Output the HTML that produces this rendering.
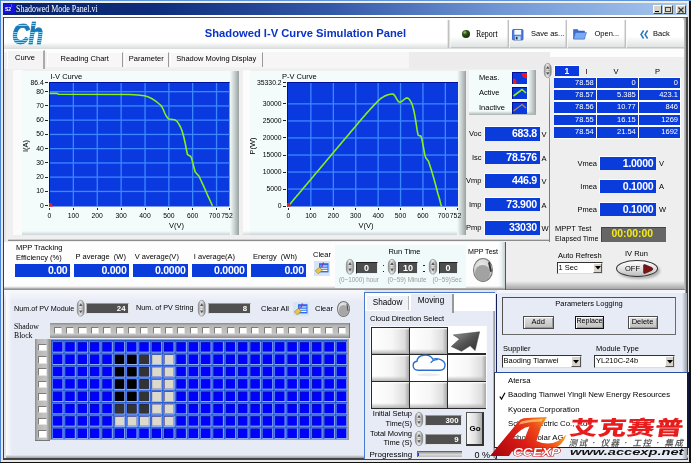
<!DOCTYPE html><html><head><meta charset="utf-8"><title>Shadowed Mode Panel.vi</title><style>
html,body{margin:0;padding:0;}
body{width:691px;height:463px;position:relative;overflow:hidden;will-change:transform;background:#e9e9ee;font-family:"Liberation Sans",sans-serif;font-size:7.5px;color:#000;}
div{position:absolute;box-sizing:border-box;}
svg{position:absolute;overflow:visible;}
.t{position:absolute;white-space:nowrap;line-height:10px;margin-top:-5px;font-size:7.5px;}
.r{transform:translateX(-100%);}
.c{transform:translateX(-50%);}
.s{font-family:"Liberation Serif",serif;}
.vb{background:#0a3cdc;color:#fff;font-weight:bold;font-size:10.6px;letter-spacing:-0.3px;text-align:right;line-height:13px;padding-right:2.6px;border-top:1px solid #fff;border-left:1px solid #fff;}
.gb{background:#505050;color:#fff;font-weight:bold;font-size:7.8px;text-align:right;line-height:9.5px;padding-right:2.5px;border-top:1px solid #9a9a9a;border-left:1px solid #b0b0b0;border-bottom:1px solid #e4e4e4;border-right:1px solid #e4e4e4;}
.cell{background:#0a3cdc;color:#fff;font-size:7.5px;text-align:right;line-height:10.6px;padding-right:2px;}
.btn{background:linear-gradient(#e2e2e2,#bebebe);border:1.3px solid #4c4c4c;text-align:center;font-size:7.5px;line-height:10.4px;box-shadow:inset 1px 1px 0 #fff,inset -1px -1px 0 #999;}
.sp{border-radius:3.5px/6px;background:linear-gradient(90deg,#888,#e8e8e8 40%,#bbb 70%,#777);border:0.5px solid #777;}
.combo{background:#fff;border:1.2px solid #333;border-right-color:#ddd;border-bottom-color:#ddd;font-size:7.5px;line-height:10.4px;padding-left:1px;}
.cbtn{background:#d8d4cc;border:1px solid #fff;border-right-color:#555;border-bottom-color:#555;}
</style></head><body>
<svg width="0" height="0" style="left:0;top:0"><defs><linearGradient id="spg" x1="0" y1="0" x2="1" y2="0"><stop offset="0" stop-color="#8c8c8c"/><stop offset="0.4" stop-color="#ececec"/><stop offset="0.7" stop-color="#c4c4c4"/><stop offset="1" stop-color="#7c7c7c"/></linearGradient></defs></svg>
<div style="left:0px;top:0px;width:691px;height:463px;background:#e4e4ea;"></div>
<div style="left:0px;top:0px;width:691px;height:1px;background:#5a94dc;"></div>
<div style="left:0px;top:0px;width:1px;height:463px;background:#4a84d4;"></div>
<div style="left:1px;top:1px;width:688px;height:2px;background:#f2ece2;"></div>
<div style="left:687.5px;top:1px;width:2px;height:462px;background:#e2e2e2;"></div>
<div style="left:689.3px;top:1px;width:1.7px;height:462px;background:#111;"></div>
<div style="left:0px;top:462px;width:691px;height:1px;background:#111;"></div>
<div style="left:3px;top:3px;width:684px;height:12px;background:linear-gradient(90deg,#0a246a 0%,#0e2c7c 22%,#3458a8 48%,#6e94d4 72%,#a8c8f0 100%);"></div>
<div style="left:4px;top:4px;width:11px;height:9px;background:#1414d8;"></div>
<span class="t" style="left:5px;top:9px;color:#fff;font-size:5px;font-weight:bold;">S2</span>
<div style="left:11px;top:4px;width:1px;height:3px;background:#f22;"></div>
<span class="t s" style="left:16px;top:9px;color:#fff;font-size:9.6px;transform:scaleX(0.83);transform-origin:0 50%;">Shadowed Mode Panel.vi</span>
<div style="left:652.5px;top:4.5px;width:9.5px;height:9px;background:#d8d4c8;border:1px solid #fff;border-right-color:#444;border-bottom-color:#444;"></div>
<div style="left:662.5px;top:4.5px;width:10.5px;height:9px;background:#d8d4c8;border:1px solid #fff;border-right-color:#444;border-bottom-color:#444;"></div>
<div style="left:675.5px;top:4.5px;width:10.5px;height:9px;background:#d8d4c8;border:1px solid #fff;border-right-color:#444;border-bottom-color:#444;"></div>
<div style="left:655px;top:10.5px;width:4px;height:1.5px;background:#000;"></div>
<div style="left:665px;top:6.5px;width:6px;height:5.5px;border:1px solid #444;border-top-width:1.5px;"></div>
<svg style="left:678px;top:6.5px" width="6" height="6"><path d="M0.5 0.5L5.5 5.5M5.5 0.5L0.5 5.5" stroke="#333" stroke-width="1.2" fill="none"/></svg>
<div style="left:3px;top:15px;width:684px;height:1.5px;background:#fff;"></div>
<div style="left:3px;top:16.5px;width:684px;height:1px;background:#555;"></div>
<div style="left:3px;top:16.5px;width:1.4px;height:443px;background:#3c3c3c;"></div>
<div style="left:4.4px;top:17.5px;width:680px;height:31.5px;background:linear-gradient(#fff 0%,#fff 78%,#d8dcdc 100%);"></div>
<div style="left:683px;top:17.5px;width:2.5px;height:442px;background:linear-gradient(90deg,#ddd,#999);"></div>
<div style="left:685.5px;top:16.5px;width:2px;height:443px;background:#444;"></div>
<span class="t" style="left:12.2px;top:33.5px;font-size:29px;line-height:32px;margin-top:-16px;font-weight:bold;font-style:italic;letter-spacing:-1px;transform:scaleX(0.83);transform-origin:0 50%;color:transparent;-webkit-text-stroke:0.8px rgba(28,128,188,0.5);background:repeating-linear-gradient(#1878b6 0px,#1878b6 1.2px,#9ad6f0 1.2px,#9ad6f0 1.9px);-webkit-background-clip:text;background-clip:text;">Ch</span>
<span class="t c" style="left:305.5px;top:33px;font-size:11.2px;font-weight:bold;color:#0a34c8;line-height:14px;margin-top:-7px;">Shadowed I-V Curve Simulation Panel</span>
<div style="left:449px;top:20px;width:59.30000000000001px;height:27.8px;background:linear-gradient(#fff 0%,#fff 60%,#e0e3e3 100%);border-bottom:1px solid #c4c4c4;"></div>
<div style="left:508.3px;top:20px;width:58.099999999999966px;height:27.8px;background:linear-gradient(#fff 0%,#fff 60%,#e0e3e3 100%);border-bottom:1px solid #c4c4c4;"></div>
<div style="left:566.4px;top:20px;width:58.89999999999998px;height:27.8px;background:linear-gradient(#fff 0%,#fff 60%,#e0e3e3 100%);border-bottom:1px solid #c4c4c4;"></div>
<div style="left:625.3px;top:20px;width:58.700000000000045px;height:27.8px;background:linear-gradient(#fff 0%,#fff 60%,#e0e3e3 100%);border-bottom:1px solid #c4c4c4;"></div>
<div style="left:447.4px;top:19.5px;width:3.2px;height:28.5px;background:linear-gradient(90deg,rgba(255,255,255,0),#b4b4b4 45%,#fdfdfd 75%,rgba(255,255,255,0));"></div>
<div style="left:506.7px;top:19.5px;width:3.2px;height:28.5px;background:linear-gradient(90deg,rgba(255,255,255,0),#b4b4b4 45%,#fdfdfd 75%,rgba(255,255,255,0));"></div>
<div style="left:564.8px;top:19.5px;width:3.2px;height:28.5px;background:linear-gradient(90deg,rgba(255,255,255,0),#b4b4b4 45%,#fdfdfd 75%,rgba(255,255,255,0));"></div>
<div style="left:623.6999999999999px;top:19.5px;width:3.2px;height:28.5px;background:linear-gradient(90deg,rgba(255,255,255,0),#b4b4b4 45%,#fdfdfd 75%,rgba(255,255,255,0));"></div>
<div style="left:461.5px;top:29.5px;width:8.5px;height:8.5px;border-radius:50%;background:radial-gradient(circle at 35% 30%,#a4c078 0%,#2a5014 32%,#0a1c06 100%);"></div>
<span class="t s" style="left:476px;top:34px;font-size:9.4px;transform:scaleX(0.85);transform-origin:0 50%;">Report</span>
<svg style="left:512px;top:28.5px" width="11.5" height="11.5" viewBox="0 0 12 12"><rect x="0.5" y="0.5" width="11" height="11" rx="1" fill="#4a80e0" stroke="#2a54b0" stroke-width="0.8"/><rect x="2.5" y="1" width="7" height="5" fill="#f4f8ff"/><rect x="3" y="7.5" width="6" height="4" fill="#c8d4ec"/><rect x="4" y="8.3" width="1.8" height="2.6" fill="#234"/></svg>
<span class="t" style="left:531px;top:34px;">Save as...</span>
<svg style="left:572.5px;top:28px" width="14" height="12" viewBox="0 0 14 12"><path d="M0.5 1.5h4l1 1.5h6v8h-11z" fill="#3a6cd0" stroke="#2a50a8" stroke-width="0.5"/><path d="M2.5 4.5h11l-2 6.5h-11z" fill="#7aaaf4" stroke="#3464c0" stroke-width="0.5"/></svg>
<span class="t" style="left:594.5px;top:34px;">Open...</span>
<svg style="left:639.5px;top:29.5px" width="9" height="9" viewBox="0 0 9 9"><path d="M3.6 0.5L1 4.5L3.6 8.5M7.6 0.5L5 4.5L7.6 8.5" stroke="#2a78b4" stroke-width="1.5" fill="none"/></svg>
<span class="t" style="left:653px;top:34px;">Back</span>
<div style="left:4.4px;top:49px;width:680px;height:8px;background:#fdfdfd;"></div>
<div style="left:4.4px;top:52px;width:545.6px;height:17px;background:#f1f1f1;"></div>
<div style="left:261px;top:52px;width:289px;height:16px;background:#f6f6f6;"></div>
<div style="left:408.5px;top:52px;width:141.5px;height:17px;background:#ececec;"></div>
<div style="left:47px;top:51.5px;width:75.5px;height:15px;background:#f7f7f7;border-top:1px solid #fff;border-left:1px solid #fff;border-right:1.5px solid #999;"></div>
<span class="t c" style="left:84.75px;top:58.8px;">Reading Chart</span>
<div style="left:124px;top:51.5px;width:44.5px;height:15px;background:#f7f7f7;border-top:1px solid #fff;border-left:1px solid #fff;border-right:1.5px solid #999;"></div>
<span class="t c" style="left:146.25px;top:58.8px;">Parameter</span>
<div style="left:170px;top:51.5px;width:92.5px;height:15px;background:#f7f7f7;border-top:1px solid #fff;border-left:1px solid #fff;border-right:1.5px solid #999;"></div>
<span class="t c" style="left:216.25px;top:58.8px;">Shadow Moving Display</span>
<div style="left:6.5px;top:49.5px;width:38.5px;height:20px;background:#f4f4f4;border-top:1px solid #fff;border-left:1px solid #fff;border-right:2px solid #aaa;"></div>
<span class="t c" style="left:25px;top:58px;">Curve</span>
<div style="left:5.5px;top:68.5px;width:544.5px;height:173px;background:#efefef;"></div>
<div style="left:8px;top:238.6px;width:542px;height:2.8px;background:linear-gradient(#efefef,#8c8c8c 75%,#b0b0b0);"></div>
<div style="left:549.4px;top:78px;width:1.3px;height:164px;background:linear-gradient(#aaa,#7c7c7c 20%);"></div>
<div style="left:550.7px;top:78px;width:1px;height:164px;background:#f8f8f8;"></div>
<div style="left:12.5px;top:70px;width:10px;height:165px;background:#fbfbfb;"></div>
<div style="left:22px;top:71px;width:217px;height:164px;background:#f3fbfb;"></div>
<div style="left:22px;top:231px;width:217px;height:4px;background:linear-gradient(#f3fbfb,#cdd6d6);"></div>
<div style="left:230px;top:71px;width:9px;height:164px;background:linear-gradient(90deg,#f3fbfb,#c4cccc 55%,#98a0a0);"></div>
<div style="left:250px;top:71px;width:216px;height:164px;background:#f3fbfb;"></div>
<div style="left:250px;top:231px;width:216px;height:4px;background:linear-gradient(#f3fbfb,#cdd6d6);"></div>
<div style="left:457px;top:71px;width:9px;height:164px;background:linear-gradient(90deg,#f3fbfb,#c4cccc 55%,#98a0a0);"></div>
<div style="left:243px;top:70px;width:7px;height:165px;background:#fcfcfc;"></div>
<div style="left:243px;top:231px;width:7px;height:4px;background:linear-gradient(#fcfcfc,#d4dada);"></div>
<svg style="left:49px;top:82px" width="180.5" height="124.5" viewBox="49 82 180.5 124.5"><rect x="49" y="82" width="180.5" height="124.5" fill="#0a3adf"/><rect x="72.7" y="82" width="1.3" height="124.5" fill="#3c86ff"/><rect x="96.6" y="82" width="1.3" height="124.5" fill="#3c86ff"/><rect x="120.5" y="82" width="1.3" height="124.5" fill="#3c86ff"/><rect x="144.4" y="82" width="1.3" height="124.5" fill="#3c86ff"/><rect x="168.2" y="82" width="1.3" height="124.5" fill="#3c86ff"/><rect x="192.0" y="82" width="1.3" height="124.5" fill="#3c86ff"/><rect x="215.9" y="82" width="1.3" height="124.5" fill="#3c86ff"/><rect x="49" y="91.0" width="180.5" height="1.3" fill="#3c86ff"/><rect x="49" y="105.3" width="180.5" height="1.3" fill="#3c86ff"/><rect x="49" y="119.5" width="180.5" height="1.3" fill="#3c86ff"/><rect x="49" y="133.8" width="180.5" height="1.3" fill="#3c86ff"/><rect x="49" y="148.0" width="180.5" height="1.3" fill="#3c86ff"/><rect x="49" y="162.3" width="180.5" height="1.3" fill="#3c86ff"/><rect x="49" y="176.5" width="180.5" height="1.3" fill="#3c86ff"/><rect x="49" y="190.8" width="180.5" height="1.3" fill="#3c86ff"/><rect x="49" y="82" width="180.5" height="1" fill="#00109c"/><rect x="49" y="82" width="1" height="124.5" fill="#00109c"/><polyline points="49.7,93.4 57,93.4 58.5,94.3 129.3,94.5 138,95 144.4,95.8 148.5,97 152,98.8 155,100.6 158,103 160.5,105 162,107 163.5,110 164.7,113 166.5,116.5 168.6,119 171,119.3 174.6,119.7 177,121.3 178.6,123.6 180.5,127 182.2,131.2 183.8,137 185.2,143.2 186.3,149 187.4,154.3 189,155.5 190.7,156.3 191.8,159 192.8,162.9 194,167.5 195.2,172 197,174 198.9,176 201,180.5 203.4,185.6 205.7,190.8 208,196.2 210.3,201 212.5,205.9" fill="none" stroke="#86f019" stroke-width="1.6" stroke-linejoin="round"/><path d="M49 203.0l2.5 0l1.5 3.5h-4z" fill="#f01818"/></svg>
<svg style="left:287px;top:82px" width="171" height="124.5" viewBox="287 82 171 124.5"><rect x="287" y="82" width="171" height="124.5" fill="#0a3adf"/><rect x="310.2" y="82" width="1.3" height="124.5" fill="#3c86ff"/><rect x="332.7" y="82" width="1.3" height="124.5" fill="#3c86ff"/><rect x="355.1" y="82" width="1.3" height="124.5" fill="#3c86ff"/><rect x="377.5" y="82" width="1.3" height="124.5" fill="#3c86ff"/><rect x="399.9" y="82" width="1.3" height="124.5" fill="#3c86ff"/><rect x="422.3" y="82" width="1.3" height="124.5" fill="#3c86ff"/><rect x="444.7" y="82" width="1.3" height="124.5" fill="#3c86ff"/><rect x="287" y="103.2" width="171" height="1.3" fill="#3c86ff"/><rect x="287" y="120.3" width="171" height="1.3" fill="#3c86ff"/><rect x="287" y="137.3" width="171" height="1.3" fill="#3c86ff"/><rect x="287" y="154.4" width="171" height="1.3" fill="#3c86ff"/><rect x="287" y="171.4" width="171" height="1.3" fill="#3c86ff"/><rect x="287" y="188.4" width="171" height="1.3" fill="#3c86ff"/><rect x="287" y="82" width="171" height="1" fill="#00109c"/><rect x="287" y="82" width="1" height="124.5" fill="#00109c"/><polyline points="288.7,205.7 289.6,204.5 290.6,203.4 291.5,202.3 292.4,201.2 293.4,200.0 294.3,198.9 295.2,197.8 296.2,196.7 297.1,195.6 298.1,194.5 299.0,193.4 299.9,192.3 300.9,191.2 301.8,190.0 302.8,188.9 303.7,187.8 304.6,186.7 305.6,185.6 306.5,184.5 307.4,183.4 308.4,182.2 309.3,181.1 310.3,180.0 311.2,178.9 312.1,177.8 313.1,176.7 314.0,175.6 314.9,174.4 315.9,173.3 316.8,172.2 317.8,171.1 318.7,170.0 319.6,168.9 320.6,167.8 321.5,166.6 322.5,165.5 323.4,164.4 324.3,163.3 325.3,162.2 326.2,161.1 327.1,160.0 328.1,158.8 329.0,157.7 330.0,156.6 330.9,155.5 331.8,154.4 332.8,153.3 333.7,152.2 334.6,151.0 335.6,149.9 336.5,148.8 337.5,147.7 338.4,146.6 339.3,145.5 340.3,144.4 341.2,143.3 342.2,142.1 343.1,141.0 344.0,139.9 345.0,138.8 345.9,137.7 346.8,136.6 347.8,135.5 348.7,134.4 349.7,133.2 350.6,132.1 351.5,131.0 352.5,129.9 353.4,128.8 354.3,127.7 355.3,126.6 356.2,125.5 357.2,124.3 358.1,123.2 359.0,122.1 360.0,121.0 360.9,119.9 361.8,118.8 362.8,117.7 363.7,116.6 364.7,115.5 365.6,114.4 366.5,113.4 367.5,112.3 368.4,111.3 369.4,110.2 370.3,109.1 371.2,108.1 372.2,107.1 373.1,106.1 374.0,105.1 375.0,104.1 375.9,103.1 376.9,102.1 377.8,101.2 378.7,100.4 379.7,99.5 380.6,98.7 381.5,98.0 382.5,97.4 383.4,96.9 384.4,96.3 385.3,95.8 386.2,95.4 387.2,95.0 388.1,94.7 389.1,94.5 390.0,94.3 390.9,94.2 391.9,94.0 392.8,94.0 393.7,94.5 394.7,95.6 395.6,97.0 396.6,98.9 397.5,100.3 398.4,101.5 399.4,102.0 400.3,102.4 401.2,101.7 402.2,101.0 403.1,100.3 404.1,99.5 405.0,98.8 405.9,98.1 406.9,98.1 407.8,98.1 408.8,98.8 409.7,99.9 410.6,101.4 411.6,103.1 412.5,105.6 413.4,108.9 414.4,113.1 415.3,118.3 416.3,124.3 417.2,130.7 418.1,135.1 419.1,135.6 420.0,135.9 420.9,136.1 421.9,139.1 422.8,144.0 423.8,149.1 424.7,154.2 425.6,157.4 426.6,158.7 427.5,160.0 428.5,161.3 429.4,163.9 430.3,166.8 431.3,169.8 432.2,172.9 433.1,176.0 434.1,179.3 435.0,182.7 436.0,186.2 436.9,189.8 437.8,193.2 438.8,196.4 439.7,199.8 440.6,203.4 441.5,206.2" fill="none" stroke="#86f019" stroke-width="1.6" stroke-linejoin="round"/><path d="M287 203.0l2.5 0l1.5 3.5h-4z" fill="#f01818"/></svg>
<span class="t" style="left:50.5px;top:76.5px;">I-V Curve</span>
<span class="t r" style="left:43.8px;top:82.5px;font-size:6.8px;">86.4</span>
<div style="left:44.8px;top:82.0px;width:3.2px;height:1px;background:#222;"></div>
<span class="t r" style="left:43.8px;top:91.6px;font-size:6.8px;">80</span>
<div style="left:44.8px;top:91.1px;width:3.2px;height:1px;background:#222;"></div>
<span class="t r" style="left:43.8px;top:105.9px;font-size:6.8px;">70</span>
<div style="left:44.8px;top:105.4px;width:3.2px;height:1px;background:#222;"></div>
<span class="t r" style="left:43.8px;top:120.1px;font-size:6.8px;">60</span>
<div style="left:44.8px;top:119.6px;width:3.2px;height:1px;background:#222;"></div>
<span class="t r" style="left:43.8px;top:134.4px;font-size:6.8px;">50</span>
<div style="left:44.8px;top:133.9px;width:3.2px;height:1px;background:#222;"></div>
<span class="t r" style="left:43.8px;top:148.6px;font-size:6.8px;">40</span>
<div style="left:44.8px;top:148.1px;width:3.2px;height:1px;background:#222;"></div>
<span class="t r" style="left:43.8px;top:162.9px;font-size:6.8px;">30</span>
<div style="left:44.8px;top:162.4px;width:3.2px;height:1px;background:#222;"></div>
<span class="t r" style="left:43.8px;top:177.1px;font-size:6.8px;">20</span>
<div style="left:44.8px;top:176.6px;width:3.2px;height:1px;background:#222;"></div>
<span class="t r" style="left:43.8px;top:191.4px;font-size:6.8px;">10</span>
<div style="left:44.8px;top:190.9px;width:3.2px;height:1px;background:#222;"></div>
<span class="t r" style="left:43.8px;top:205.7px;font-size:6.8px;">0</span>
<div style="left:44.8px;top:205.2px;width:3.2px;height:1px;background:#222;"></div>
<span class="t c" style="left:49.4px;top:215.6px;font-size:6.8px;">0</span>
<div style="left:48.9px;top:207.5px;width:1px;height:2px;background:#222;"></div>
<span class="t c" style="left:73.3px;top:215.6px;font-size:6.8px;">100</span>
<div style="left:72.8px;top:207.5px;width:1px;height:2px;background:#222;"></div>
<span class="t c" style="left:97.2px;top:215.6px;font-size:6.8px;">200</span>
<div style="left:96.7px;top:207.5px;width:1px;height:2px;background:#222;"></div>
<span class="t c" style="left:121.1px;top:215.6px;font-size:6.8px;">300</span>
<div style="left:120.6px;top:207.5px;width:1px;height:2px;background:#222;"></div>
<span class="t c" style="left:145px;top:215.6px;font-size:6.8px;">400</span>
<div style="left:144.5px;top:207.5px;width:1px;height:2px;background:#222;"></div>
<span class="t c" style="left:168.8px;top:215.6px;font-size:6.8px;">500</span>
<div style="left:168.3px;top:207.5px;width:1px;height:2px;background:#222;"></div>
<span class="t c" style="left:192.6px;top:215.6px;font-size:6.8px;">600</span>
<div style="left:192.1px;top:207.5px;width:1px;height:2px;background:#222;"></div>
<span class="t c" style="left:214.5px;top:215.6px;font-size:6.8px;">700</span>
<div style="left:216px;top:207.5px;width:1px;height:2px;background:#222;"></div>
<span class="t c" style="left:227px;top:215.6px;font-size:6.8px;">752</span>
<div style="left:228.5px;top:207.5px;width:1px;height:2px;background:#222;"></div>
<span class="t c" style="left:176.5px;top:226px;">V(V)</span>
<span class="t" style="left:25.5px;top:145.5px;transform:translate(-50%,0) rotate(-90deg);">I(A)</span>
<span class="t" style="left:282px;top:76.5px;">P-V Curve</span>
<span class="t r" style="left:281.6px;top:82.5px;font-size:6.8px;">35330.2</span>
<div style="left:282.8px;top:82.0px;width:3.2px;height:1px;background:#222;"></div>
<span class="t r" style="left:281.6px;top:103.8px;font-size:6.8px;">30000</span>
<div style="left:282.8px;top:103.3px;width:3.2px;height:1px;background:#222;"></div>
<span class="t r" style="left:281.6px;top:120.9px;font-size:6.8px;">25000</span>
<div style="left:282.8px;top:120.4px;width:3.2px;height:1px;background:#222;"></div>
<span class="t r" style="left:281.6px;top:137.9px;font-size:6.8px;">20000</span>
<div style="left:282.8px;top:137.4px;width:3.2px;height:1px;background:#222;"></div>
<span class="t r" style="left:281.6px;top:155px;font-size:6.8px;">15000</span>
<div style="left:282.8px;top:154.5px;width:3.2px;height:1px;background:#222;"></div>
<span class="t r" style="left:281.6px;top:172px;font-size:6.8px;">10000</span>
<div style="left:282.8px;top:171.5px;width:3.2px;height:1px;background:#222;"></div>
<span class="t r" style="left:281.6px;top:189px;font-size:6.8px;">5000</span>
<div style="left:282.8px;top:188.5px;width:3.2px;height:1px;background:#222;"></div>
<span class="t r" style="left:281.6px;top:206px;font-size:6.8px;">0</span>
<div style="left:282.8px;top:205.5px;width:3.2px;height:1px;background:#222;"></div>
<div style="left:282.8px;top:85.5px;width:3.2px;height:1px;background:#222;"></div>
<span class="t c" style="left:288.5px;top:215.6px;font-size:6.8px;">0</span>
<div style="left:288.0px;top:207.5px;width:1px;height:2px;background:#222;"></div>
<span class="t c" style="left:310.8px;top:215.6px;font-size:6.8px;">100</span>
<div style="left:310.3px;top:207.5px;width:1px;height:2px;background:#222;"></div>
<span class="t c" style="left:333.3px;top:215.6px;font-size:6.8px;">200</span>
<div style="left:332.8px;top:207.5px;width:1px;height:2px;background:#222;"></div>
<span class="t c" style="left:355.7px;top:215.6px;font-size:6.8px;">300</span>
<div style="left:355.2px;top:207.5px;width:1px;height:2px;background:#222;"></div>
<span class="t c" style="left:378.1px;top:215.6px;font-size:6.8px;">400</span>
<div style="left:377.6px;top:207.5px;width:1px;height:2px;background:#222;"></div>
<span class="t c" style="left:400.5px;top:215.6px;font-size:6.8px;">500</span>
<div style="left:400.0px;top:207.5px;width:1px;height:2px;background:#222;"></div>
<span class="t c" style="left:422.9px;top:215.6px;font-size:6.8px;">600</span>
<div style="left:422.4px;top:207.5px;width:1px;height:2px;background:#222;"></div>
<span class="t c" style="left:443.5px;top:215.6px;font-size:6.8px;">700</span>
<div style="left:445.3px;top:207.5px;width:1px;height:2px;background:#222;"></div>
<span class="t c" style="left:455.5px;top:215.6px;font-size:6.8px;">752</span>
<div style="left:457px;top:207.5px;width:1px;height:2px;background:#222;"></div>
<span class="t c" style="left:366px;top:226px;">V(V)</span>
<span class="t" style="left:253px;top:145.5px;transform:translate(-50%,0) rotate(-90deg);">P(W)</span>
<div style="left:469px;top:70px;width:67px;height:45px;background:#f4fbfb;"></div>
<div style="left:528px;top:70px;width:8px;height:45px;background:linear-gradient(90deg,#f4fbfb,#b8c0c0 70%,#98a0a0);"></div>
<div style="left:469px;top:111px;width:67px;height:4px;background:linear-gradient(#f4fbfb00,#aab2b2);"></div>
<span class="t" style="left:479px;top:77.5px;">Meas.</span>
<div style="left:512px;top:71.6px;width:15px;height:12px;background:#0a3adf;border-top:1px solid #00109c;border-left:1px solid #00109c;"></div>
<span class="t" style="left:479px;top:92.5px;">Active</span>
<div style="left:512px;top:86.8px;width:15px;height:12px;background:#0a3adf;border-top:1px solid #00109c;border-left:1px solid #00109c;"></div>
<span class="t" style="left:479px;top:107.5px;">Inactive</span>
<div style="left:512px;top:102px;width:15px;height:12px;background:#0a3adf;border-top:1px solid #00109c;border-left:1px solid #00109c;"></div>
<svg style="left:512px;top:71.6px" width="15" height="12"><path d="M1 6.5a3.5 3.5 0 0 1 3.5 3.5v2h-3.5zM10 1h5v5a4 4 0 0 1 -5 -5z" fill="#f01818"/></svg>
<svg style="left:512px;top:86.8px" width="15" height="12"><path d="M1.5 9L10 2.5L14 6" stroke="#86f514" stroke-width="1.6" fill="none"/></svg>
<svg style="left:512px;top:102px" width="15" height="12"><path d="M1.5 9L10 2.5L14 6" stroke="#b08860" stroke-width="1.2" fill="none"/></svg>
<div class="vb" style="left:483.5px;top:126.0px;width:56px;height:14.6px;">683.8</div>
<span class="t r" style="left:481.5px;top:134.0px;">Voc</span>
<span class="t" style="left:541.5px;top:135.0px;">V</span>
<div class="vb" style="left:483.5px;top:149.5px;width:56px;height:14.6px;">78.576</div>
<span class="t r" style="left:481.5px;top:157.5px;">Isc</span>
<span class="t" style="left:541.5px;top:158.5px;">A</span>
<div class="vb" style="left:483.5px;top:173.0px;width:56px;height:14.6px;">446.9</div>
<span class="t r" style="left:481.5px;top:181.0px;">Vmp</span>
<span class="t" style="left:541.5px;top:182.0px;">V</span>
<div class="vb" style="left:483.5px;top:196.5px;width:56px;height:14.6px;">73.900</div>
<span class="t r" style="left:481.5px;top:204.5px;">Imp</span>
<span class="t" style="left:541.5px;top:205.5px;">A</span>
<div class="vb" style="left:483.5px;top:220.0px;width:56px;height:14.6px;">33030</div>
<span class="t r" style="left:481.5px;top:228.0px;">Pmp</span>
<span class="t" style="left:541.5px;top:229.0px;">W</span>
<div style="left:550px;top:56.5px;width:134px;height:226px;background:#eeeeee;"></div>
<div style="left:506px;top:242px;width:178px;height:41px;background:#eeeeee;"></div>
<div style="left:506px;top:281px;width:178px;height:7.7px;background:linear-gradient(#eee,#a6a6a6);"></div>
<div style="left:505px;top:288.5px;width:180px;height:1.2px;background:#808080;"></div>
<div style="left:497px;top:289.7px;width:188px;height:3px;background:#f4f5fa;"></div>
<svg style="left:544px;top:63px" width="7.5" height="15" viewBox="0 0 7.5 15"><rect x="0.3" y="0.3" width="6.9" height="14.4" rx="3.5" ry="5.0" fill="url(#spg)" stroke="#808080" stroke-width="0.6"/><path d="M3.75 3.0L5.45 5.8H2.05ZM3.75 12.0L5.45 9.2H2.05Z" fill="#555"/><path d="M1.2 7.5H6.3" stroke="#999" stroke-width="0.5"/></svg>
<div style="left:553.8px;top:64.5px;width:25px;height:11.2px;background:#0a3adf;color:#fff;font-weight:bold;font-size:8.5px;text-align:center;line-height:10px;border-top:1px solid #fff;border-left:1px solid #fff;">1</div>
<span class="t c" style="left:586.5px;top:71.5px;">I</span>
<span class="t c" style="left:616px;top:71.5px;">V</span>
<span class="t c" style="left:657.5px;top:71.5px;">P</span>
<div style="left:553.5px;top:76.5px;width:127.5px;height:62px;background:#fdfdfd;"></div>
<div class="cell" style="left:554.4px;top:77.5px;width:41.4px;height:10.6px;">78.58</div>
<div class="cell" style="left:597.4px;top:77.5px;width:40.4px;height:10.6px;">0</div>
<div class="cell" style="left:639.4px;top:77.5px;width:40.6px;height:10.6px;">0</div>
<div class="cell" style="left:554.4px;top:89.9px;width:41.4px;height:10.6px;">78.57</div>
<div class="cell" style="left:597.4px;top:89.9px;width:40.4px;height:10.6px;">5.385</div>
<div class="cell" style="left:639.4px;top:89.9px;width:40.6px;height:10.6px;">423.1</div>
<div class="cell" style="left:554.4px;top:102.3px;width:41.4px;height:10.6px;">78.56</div>
<div class="cell" style="left:597.4px;top:102.3px;width:40.4px;height:10.6px;">10.77</div>
<div class="cell" style="left:639.4px;top:102.3px;width:40.6px;height:10.6px;">846</div>
<div class="cell" style="left:554.4px;top:114.7px;width:41.4px;height:10.6px;">78.55</div>
<div class="cell" style="left:597.4px;top:114.7px;width:40.4px;height:10.6px;">16.15</div>
<div class="cell" style="left:639.4px;top:114.7px;width:40.6px;height:10.6px;">1269</div>
<div class="cell" style="left:554.4px;top:127.1px;width:41.4px;height:10.6px;">78.54</div>
<div class="cell" style="left:597.4px;top:127.1px;width:40.4px;height:10.6px;">21.54</div>
<div class="cell" style="left:639.4px;top:127.1px;width:40.6px;height:10.6px;">1692</div>
<div class="vb" style="left:599px;top:156px;width:57px;height:14px;">1.0000</div>
<span class="t r" style="left:597px;top:163.5px;">Vmea</span>
<span class="t" style="left:659px;top:163.5px;">V</span>
<div class="vb" style="left:599px;top:179px;width:57px;height:14px;">0.1000</div>
<span class="t r" style="left:597px;top:186.5px;">Imea</span>
<span class="t" style="left:659px;top:186.5px;">A</span>
<div class="vb" style="left:599px;top:202px;width:57px;height:14px;">0.1000</div>
<span class="t r" style="left:597px;top:209.5px;">Pmea</span>
<span class="t" style="left:659px;top:209.5px;">W</span>
<span class="t" style="left:555px;top:229px;">MPPT Test</span>
<span class="t" style="left:555px;top:238.5px;font-size:7.2px;">Elapsed Time</span>
<div style="left:600.5px;top:227px;width:65.5px;height:14.5px;background:#666;color:#f4ec14;font-weight:bold;font-size:10.4px;text-align:center;line-height:12px;padding-right:3px;border-top:1px solid #444;border-left:1px solid #444;">00:00:00</div>
<span class="t" style="left:558px;top:255.5px;">Auto Refresh</span>
<div class="combo" style="left:556.5px;top:261.5px;width:46.5px;height:12.5px;">1 Sec</div>
<div class="cbtn" style="left:592.5px;top:262.5px;width:9.5px;height:10.5px;"></div>
<svg style="left:594.5px;top:266px" width="6" height="4"><path d="M0 0h6l-3 3.5z" fill="#000"/></svg>
<span class="t" style="left:625px;top:253.5px;">IV Run</span>
<div style="left:617.5px;top:262.5px;width:42px;height:16.5px;border-radius:50%;background:#b0b0b0;filter:blur(1px);"></div>
<div style="left:615.5px;top:260px;width:42px;height:17px;border-radius:50%;background:linear-gradient(#fff,#ddd 60%,#bbb);border:1px solid #333;"></div>
<span class="t" style="left:625px;top:268.5px;">OFF</span>
<svg style="left:642px;top:263.5px" width="12" height="10"><path d="M1.5 1.2Q1.5 0.3 3 0.6L10 3.6Q12 5 10 6.4L3 9.4Q1.5 9.7 1.5 8.8z" fill="#7a1414" stroke="#4a0808" stroke-width="0.5"/></svg>
<div style="left:4.4px;top:242px;width:501px;height:47px;background:#fdfdfd;"></div>
<div style="left:497.5px;top:242px;width:8px;height:47px;background:linear-gradient(90deg,#fdfdfd,#eef4f4 40%,#bcc4c4);"></div>
<div style="left:4.4px;top:286.3px;width:501.5px;height:3.8px;background:linear-gradient(rgba(253,253,253,0),#d0d0d0 45%,#8a8a8a 80%,#a8a8a8);"></div>
<div style="left:505px;top:242px;width:1.3px;height:48px;background:#555;"></div>
<div style="left:335px;top:245px;width:131px;height:42.5px;background:#f0fafa;"></div>
<span class="t" style="left:16px;top:248px;">MPP Tracking</span>
<span class="t" style="left:16px;top:258px;">Efficiency (%)</span>
<div class="vb" style="left:14.0px;top:263px;width:56px;height:14px;">0.00</div>
<div class="vb" style="left:73.1px;top:263px;width:56px;height:14px;">0.000</div>
<span class="t" style="left:75.6px;top:257px;">P average&nbsp; (W)</span>
<div class="vb" style="left:132.2px;top:263px;width:56px;height:14px;">0.0000</div>
<span class="t" style="left:134.7px;top:257px;">V average(V)</span>
<div class="vb" style="left:191.3px;top:263px;width:56px;height:14px;">0.0000</div>
<span class="t" style="left:193.8px;top:257px;">I average(A)</span>
<div class="vb" style="left:250.4px;top:263px;width:56px;height:14px;">0.00</div>
<span class="t" style="left:252.9px;top:257px;">Energy&nbsp; (Wh)</span>
<span class="t" style="left:313px;top:254.5px;">Clear</span>
<div style="left:313.5px;top:261px;width:16px;height:14.5px;background:#d8e4f4;"></div>
<svg style="left:313.5px;top:261px" width="16" height="14.5" viewBox="0 0 16 14.5"><rect x="5" y="2.2" width="9.5" height="9.2" fill="#2a6cf0"/><path d="M6.5 5h7M6.5 7.2h7M6.5 9.4h7" stroke="#fff" stroke-width="1.1"/><path d="M9.5 1.5l-1.8 4.5" stroke="#8a38b0" stroke-width="1.3"/><path d="M1.2 9.8l4.2-3.4l3 2.8l-4.2 3.6z" fill="#e8c84a" stroke="#9a7a20" stroke-width="0.6"/></svg>
<span class="t c" style="left:404.5px;top:251.5px;">Run Time</span>
<svg style="left:345.5px;top:259px" width="8" height="15.5" viewBox="0 0 8 15.5"><rect x="0.3" y="0.3" width="7.4" height="14.9" rx="3.7" ry="5.2" fill="url(#spg)" stroke="#808080" stroke-width="0.6"/><path d="M4.0 3.1L5.7 5.9H2.3ZM4.0 12.4L5.7 9.6H2.3Z" fill="#555"/><path d="M1.2 7.75H6.8" stroke="#999" stroke-width="0.5"/></svg>
<div style="left:355.5px;top:262px;width:22px;height:12px;background:#4e4e4e;color:#fff;font-weight:bold;font-size:9px;text-align:center;line-height:10.5px;border-top:1px solid #222;border-left:1px solid #222;border-right:1px solid #eee;border-bottom:1px solid #eee;">0</div>
<svg style="left:388.3px;top:259px" width="8" height="15.5" viewBox="0 0 8 15.5"><rect x="0.3" y="0.3" width="7.4" height="14.9" rx="3.7" ry="5.2" fill="url(#spg)" stroke="#808080" stroke-width="0.6"/><path d="M4.0 3.1L5.7 5.9H2.3ZM4.0 12.4L5.7 9.6H2.3Z" fill="#555"/><path d="M1.2 7.75H6.8" stroke="#999" stroke-width="0.5"/></svg>
<div style="left:398px;top:262px;width:20px;height:12px;background:#4e4e4e;color:#fff;font-weight:bold;font-size:9px;text-align:center;line-height:10.5px;border-top:1px solid #222;border-left:1px solid #222;border-right:1px solid #eee;border-bottom:1px solid #eee;">10</div>
<svg style="left:428.6px;top:259px" width="8" height="15.5" viewBox="0 0 8 15.5"><rect x="0.3" y="0.3" width="7.4" height="14.9" rx="3.7" ry="5.2" fill="url(#spg)" stroke="#808080" stroke-width="0.6"/><path d="M4.0 3.1L5.7 5.9H2.3ZM4.0 12.4L5.7 9.6H2.3Z" fill="#555"/><path d="M1.2 7.75H6.8" stroke="#999" stroke-width="0.5"/></svg>
<div style="left:438.5px;top:262px;width:19px;height:12px;background:#4e4e4e;color:#fff;font-weight:bold;font-size:9px;text-align:center;line-height:10.5px;border-top:1px solid #222;border-left:1px solid #222;border-right:1px solid #eee;border-bottom:1px solid #eee;">0</div>
<div style="left:382.7px;top:264.5px;width:1.8px;height:1.8px;background:#222;"></div>
<div style="left:382.7px;top:270.5px;width:1.8px;height:1.8px;background:#222;"></div>
<div style="left:423.2px;top:264.5px;width:1.8px;height:1.8px;background:#222;"></div>
<div style="left:423.2px;top:270.5px;width:1.8px;height:1.8px;background:#222;"></div>
<span class="t" style="left:339px;top:280px;color:#999;font-size:6.3px;">(0~1000) hour</span>
<span class="t" style="left:387.5px;top:280px;color:#999;font-size:6.3px;">(0~59) Minute</span>
<span class="t" style="left:432.5px;top:280px;color:#999;font-size:6.3px;">(0~59)Sec</span>
<span class="t" style="left:468px;top:251.5px;font-size:7.1px;">MPP Test</span>
<div style="left:472.5px;top:258px;width:20.5px;height:24px;border-radius:50%;background:radial-gradient(ellipse at 40% 35%,#ececec,#cfcfcf 60%,#a0a0a0);border:0.7px solid #777;"></div>
<div style="left:475px;top:265px;width:14.5px;height:16px;border-radius:50%;background:#a2a2a2;"></div>
<div style="left:488.5px;top:262px;width:2px;height:10px;background:#333;border-radius:1px;transform:rotate(-12deg);"></div>
<div style="left:5.5px;top:290px;width:359px;height:168px;background:linear-gradient(90deg,#fdfdfe 0,#e7ebf5 6px);"></div>
<div style="left:4.4px;top:290px;width:360px;height:12px;background:linear-gradient(#f8f9fc,rgba(231,235,245,0));"></div>
<span class="t" style="left:14px;top:308.5px;font-size:7.2px;">Num.of PV Module</span>
<svg style="left:76.5px;top:299.5px" width="7.5" height="16.5" viewBox="0 0 7.5 16.5"><rect x="0.3" y="0.3" width="6.9" height="15.9" rx="3.5" ry="5.0" fill="url(#spg)" stroke="#808080" stroke-width="0.6"/><path d="M3.75 3.3L5.45 6.1H2.05ZM3.75 13.2L5.45 10.4H2.05Z" fill="#555"/><path d="M1.2 8.25H6.3" stroke="#999" stroke-width="0.5"/></svg>
<div class="gb" style="left:86px;top:302.5px;width:43px;height:11px;">24</div>
<span class="t" style="left:136px;top:308px;font-size:7.2px;">Num. of PV String</span>
<svg style="left:198px;top:299.5px" width="7.5" height="16.5" viewBox="0 0 7.5 16.5"><rect x="0.3" y="0.3" width="6.9" height="15.9" rx="3.5" ry="5.0" fill="url(#spg)" stroke="#808080" stroke-width="0.6"/><path d="M3.75 3.3L5.45 6.1H2.05ZM3.75 13.2L5.45 10.4H2.05Z" fill="#555"/><path d="M1.2 8.25H6.3" stroke="#999" stroke-width="0.5"/></svg>
<div class="gb" style="left:207.5px;top:302.5px;width:43px;height:11px;">8</div>
<span class="t" style="left:261px;top:308.5px;">Clear All</span>
<div style="left:292.5px;top:301.5px;width:16px;height:14.5px;background:#d8e4f4;"></div>
<svg style="left:292.5px;top:301.5px" width="16" height="14.5" viewBox="0 0 16 14.5"><rect x="5" y="2.2" width="9.5" height="9.2" fill="#2a6cf0"/><path d="M6.5 5h7M6.5 7.2h7M6.5 9.4h7" stroke="#fff" stroke-width="1.1"/><path d="M9.5 1.5l-1.8 4.5" stroke="#8a38b0" stroke-width="1.3"/><path d="M1.2 9.8l4.2-3.4l3 2.8l-4.2 3.6z" fill="#e8c84a" stroke="#9a7a20" stroke-width="0.6"/></svg>
<span class="t" style="left:315px;top:308.5px;">Clear</span>
<div style="left:337px;top:301px;width:13px;height:15.5px;border-radius:50%;background:radial-gradient(ellipse at 40% 35%,#ececec,#cfcfcf 60%,#9a9a9a);border:0.7px solid #777;"></div>
<div style="left:339px;top:305px;width:8.5px;height:10.5px;border-radius:50%;background:#a6a6a6;"></div>
<div style="left:347px;top:304px;width:1.3px;height:7px;background:#444;border-radius:1px;transform:rotate(-10deg);"></div>
<span class="t s" style="left:14px;top:325.5px;font-size:8.8px;transform:scaleX(0.88);transform-origin:0 50%;">Shadow</span>
<span class="t s" style="left:14px;top:334.5px;font-size:8.8px;transform:scaleX(0.88);transform-origin:0 50%;">Block</span>
<div style="left:50.4px;top:323.2px;width:299.5px;height:15.2px;background:linear-gradient(#8c8c8c,#b8b8b8 18%,#c4c4c4 75%,#8a8a8a);border-right:1px solid #777;"></div>
<div style="left:53.8px;top:326.5px;width:8.2px;height:7.8px;background:#fff;border:0.8px solid #e4e4e4;border-top-color:#7c7c7c;border-left-color:#7c7c7c;"></div>
<div style="left:66.14px;top:326.5px;width:8.2px;height:7.8px;background:#fff;border:0.8px solid #e4e4e4;border-top-color:#7c7c7c;border-left-color:#7c7c7c;"></div>
<div style="left:78.48px;top:326.5px;width:8.2px;height:7.8px;background:#fff;border:0.8px solid #e4e4e4;border-top-color:#7c7c7c;border-left-color:#7c7c7c;"></div>
<div style="left:90.82px;top:326.5px;width:8.2px;height:7.8px;background:#fff;border:0.8px solid #e4e4e4;border-top-color:#7c7c7c;border-left-color:#7c7c7c;"></div>
<div style="left:103.16px;top:326.5px;width:8.2px;height:7.8px;background:#fff;border:0.8px solid #e4e4e4;border-top-color:#7c7c7c;border-left-color:#7c7c7c;"></div>
<div style="left:115.5px;top:326.5px;width:8.2px;height:7.8px;background:#fff;border:0.8px solid #e4e4e4;border-top-color:#7c7c7c;border-left-color:#7c7c7c;"></div>
<div style="left:127.84px;top:326.5px;width:8.2px;height:7.8px;background:#fff;border:0.8px solid #e4e4e4;border-top-color:#7c7c7c;border-left-color:#7c7c7c;"></div>
<div style="left:140.18px;top:326.5px;width:8.2px;height:7.8px;background:#fff;border:0.8px solid #e4e4e4;border-top-color:#7c7c7c;border-left-color:#7c7c7c;"></div>
<div style="left:152.52px;top:326.5px;width:8.2px;height:7.8px;background:#fff;border:0.8px solid #e4e4e4;border-top-color:#7c7c7c;border-left-color:#7c7c7c;"></div>
<div style="left:164.86px;top:326.5px;width:8.2px;height:7.8px;background:#fff;border:0.8px solid #e4e4e4;border-top-color:#7c7c7c;border-left-color:#7c7c7c;"></div>
<div style="left:177.2px;top:326.5px;width:8.2px;height:7.8px;background:#fff;border:0.8px solid #e4e4e4;border-top-color:#7c7c7c;border-left-color:#7c7c7c;"></div>
<div style="left:189.54px;top:326.5px;width:8.2px;height:7.8px;background:#fff;border:0.8px solid #e4e4e4;border-top-color:#7c7c7c;border-left-color:#7c7c7c;"></div>
<div style="left:201.88px;top:326.5px;width:8.2px;height:7.8px;background:#fff;border:0.8px solid #e4e4e4;border-top-color:#7c7c7c;border-left-color:#7c7c7c;"></div>
<div style="left:214.22px;top:326.5px;width:8.2px;height:7.8px;background:#fff;border:0.8px solid #e4e4e4;border-top-color:#7c7c7c;border-left-color:#7c7c7c;"></div>
<div style="left:226.56px;top:326.5px;width:8.2px;height:7.8px;background:#fff;border:0.8px solid #e4e4e4;border-top-color:#7c7c7c;border-left-color:#7c7c7c;"></div>
<div style="left:238.9px;top:326.5px;width:8.2px;height:7.8px;background:#fff;border:0.8px solid #e4e4e4;border-top-color:#7c7c7c;border-left-color:#7c7c7c;"></div>
<div style="left:251.24px;top:326.5px;width:8.2px;height:7.8px;background:#fff;border:0.8px solid #e4e4e4;border-top-color:#7c7c7c;border-left-color:#7c7c7c;"></div>
<div style="left:263.58px;top:326.5px;width:8.2px;height:7.8px;background:#fff;border:0.8px solid #e4e4e4;border-top-color:#7c7c7c;border-left-color:#7c7c7c;"></div>
<div style="left:275.92px;top:326.5px;width:8.2px;height:7.8px;background:#fff;border:0.8px solid #e4e4e4;border-top-color:#7c7c7c;border-left-color:#7c7c7c;"></div>
<div style="left:288.26px;top:326.5px;width:8.2px;height:7.8px;background:#fff;border:0.8px solid #e4e4e4;border-top-color:#7c7c7c;border-left-color:#7c7c7c;"></div>
<div style="left:300.6px;top:326.5px;width:8.2px;height:7.8px;background:#fff;border:0.8px solid #e4e4e4;border-top-color:#7c7c7c;border-left-color:#7c7c7c;"></div>
<div style="left:312.94px;top:326.5px;width:8.2px;height:7.8px;background:#fff;border:0.8px solid #e4e4e4;border-top-color:#7c7c7c;border-left-color:#7c7c7c;"></div>
<div style="left:325.28px;top:326.5px;width:8.2px;height:7.8px;background:#fff;border:0.8px solid #e4e4e4;border-top-color:#7c7c7c;border-left-color:#7c7c7c;"></div>
<div style="left:337.62px;top:326.5px;width:8.2px;height:7.8px;background:#fff;border:0.8px solid #e4e4e4;border-top-color:#7c7c7c;border-left-color:#7c7c7c;"></div>
<div style="left:35.4px;top:339.4px;width:14.2px;height:101.5px;background:linear-gradient(90deg,#8c8c8c,#b8b8b8 18%,#c4c4c4 75%,#8a8a8a);border-bottom:1px solid #777;"></div>
<div style="left:38.2px;top:343.8px;width:8.6px;height:7.6px;background:#fff;border:0.8px solid #e4e4e4;border-top-color:#7c7c7c;border-left-color:#7c7c7c;"></div>
<div style="left:38.2px;top:356.14px;width:8.6px;height:7.6px;background:#fff;border:0.8px solid #e4e4e4;border-top-color:#7c7c7c;border-left-color:#7c7c7c;"></div>
<div style="left:38.2px;top:368.48px;width:8.6px;height:7.6px;background:#fff;border:0.8px solid #e4e4e4;border-top-color:#7c7c7c;border-left-color:#7c7c7c;"></div>
<div style="left:38.2px;top:380.82px;width:8.6px;height:7.6px;background:#fff;border:0.8px solid #e4e4e4;border-top-color:#7c7c7c;border-left-color:#7c7c7c;"></div>
<div style="left:38.2px;top:393.16px;width:8.6px;height:7.6px;background:#fff;border:0.8px solid #e4e4e4;border-top-color:#7c7c7c;border-left-color:#7c7c7c;"></div>
<div style="left:38.2px;top:405.5px;width:8.6px;height:7.6px;background:#fff;border:0.8px solid #e4e4e4;border-top-color:#7c7c7c;border-left-color:#7c7c7c;"></div>
<div style="left:38.2px;top:417.84px;width:8.6px;height:7.6px;background:#fff;border:0.8px solid #e4e4e4;border-top-color:#7c7c7c;border-left-color:#7c7c7c;"></div>
<div style="left:38.2px;top:430.18px;width:8.6px;height:7.6px;background:#fff;border:0.8px solid #e4e4e4;border-top-color:#7c7c7c;border-left-color:#7c7c7c;"></div>
<div style="left:50.2px;top:339.2px;width:299px;height:101.3px;background:#a49c8c;"></div>
<div style="left:51.2px;top:340.4px;width:296.15999999999997px;height:98.72px;background:#2458c8;"></div>
<svg style="left:0;top:0" width="691" height="463"><defs><pattern id="cp" x="52.00" y="341.20" width="12.34" height="12.34" patternUnits="userSpaceOnUse"><rect x="0.00" y="0.00" width="11.4" height="11.4" fill="#4a80f8"/><rect x="0.90" y="0.90" width="10.5" height="10.5" fill="#a8c4ff"/><rect x="0.90" y="0.90" width="9.6" height="9.6" fill="#061078"/><rect x="1.40" y="1.40" width="9.1" height="9.1" fill="#0000fe"/></pattern></defs><rect x="52.00" y="341.20" width="295.16" height="97.72" fill="url(#cp)"/><rect x="113.70" y="353.54" width="11.4" height="11.4" fill="#4a80f8"/><rect x="114.60" y="354.44" width="10.5" height="10.5" fill="#a8c4ff"/><rect x="114.60" y="354.44" width="9.6" height="9.6" fill="#061078"/><rect x="115.10" y="354.94" width="9.1" height="9.1" fill="#000"/><rect x="126.04" y="353.54" width="11.4" height="11.4" fill="#4a80f8"/><rect x="126.94" y="354.44" width="10.5" height="10.5" fill="#a8c4ff"/><rect x="126.94" y="354.44" width="9.6" height="9.6" fill="#061078"/><rect x="127.44" y="354.94" width="9.1" height="9.1" fill="#000"/><rect x="138.38" y="353.54" width="11.4" height="11.4" fill="#4a80f8"/><rect x="139.28" y="354.44" width="10.5" height="10.5" fill="#a8c4ff"/><rect x="139.28" y="354.44" width="9.6" height="9.6" fill="#061078"/><rect x="139.78" y="354.94" width="9.1" height="9.1" fill="#333"/><rect x="150.72" y="353.54" width="11.4" height="11.4" fill="#4a80f8"/><rect x="151.62" y="354.44" width="10.5" height="10.5" fill="#a8c4ff"/><rect x="151.62" y="354.44" width="9.6" height="9.6" fill="#061078"/><rect x="152.12" y="354.94" width="9.1" height="9.1" fill="#dcd8cc"/><rect x="163.06" y="353.54" width="11.4" height="11.4" fill="#4a80f8"/><rect x="163.96" y="354.44" width="10.5" height="10.5" fill="#a8c4ff"/><rect x="163.96" y="354.44" width="9.6" height="9.6" fill="#061078"/><rect x="164.46" y="354.94" width="9.1" height="9.1" fill="#dcd8cc"/><rect x="113.70" y="365.88" width="11.4" height="11.4" fill="#4a80f8"/><rect x="114.60" y="366.78" width="10.5" height="10.5" fill="#a8c4ff"/><rect x="114.60" y="366.78" width="9.6" height="9.6" fill="#061078"/><rect x="115.10" y="367.28" width="9.1" height="9.1" fill="#000"/><rect x="126.04" y="365.88" width="11.4" height="11.4" fill="#4a80f8"/><rect x="126.94" y="366.78" width="10.5" height="10.5" fill="#a8c4ff"/><rect x="126.94" y="366.78" width="9.6" height="9.6" fill="#061078"/><rect x="127.44" y="367.28" width="9.1" height="9.1" fill="#000"/><rect x="138.38" y="365.88" width="11.4" height="11.4" fill="#4a80f8"/><rect x="139.28" y="366.78" width="10.5" height="10.5" fill="#a8c4ff"/><rect x="139.28" y="366.78" width="9.6" height="9.6" fill="#061078"/><rect x="139.78" y="367.28" width="9.1" height="9.1" fill="#333"/><rect x="150.72" y="365.88" width="11.4" height="11.4" fill="#4a80f8"/><rect x="151.62" y="366.78" width="10.5" height="10.5" fill="#a8c4ff"/><rect x="151.62" y="366.78" width="9.6" height="9.6" fill="#061078"/><rect x="152.12" y="367.28" width="9.1" height="9.1" fill="#dcd8cc"/><rect x="163.06" y="365.88" width="11.4" height="11.4" fill="#4a80f8"/><rect x="163.96" y="366.78" width="10.5" height="10.5" fill="#a8c4ff"/><rect x="163.96" y="366.78" width="9.6" height="9.6" fill="#061078"/><rect x="164.46" y="367.28" width="9.1" height="9.1" fill="#dcd8cc"/><rect x="113.70" y="378.22" width="11.4" height="11.4" fill="#4a80f8"/><rect x="114.60" y="379.12" width="10.5" height="10.5" fill="#a8c4ff"/><rect x="114.60" y="379.12" width="9.6" height="9.6" fill="#061078"/><rect x="115.10" y="379.62" width="9.1" height="9.1" fill="#000"/><rect x="126.04" y="378.22" width="11.4" height="11.4" fill="#4a80f8"/><rect x="126.94" y="379.12" width="10.5" height="10.5" fill="#a8c4ff"/><rect x="126.94" y="379.12" width="9.6" height="9.6" fill="#061078"/><rect x="127.44" y="379.62" width="9.1" height="9.1" fill="#000"/><rect x="138.38" y="378.22" width="11.4" height="11.4" fill="#4a80f8"/><rect x="139.28" y="379.12" width="10.5" height="10.5" fill="#a8c4ff"/><rect x="139.28" y="379.12" width="9.6" height="9.6" fill="#061078"/><rect x="139.78" y="379.62" width="9.1" height="9.1" fill="#333"/><rect x="150.72" y="378.22" width="11.4" height="11.4" fill="#4a80f8"/><rect x="151.62" y="379.12" width="10.5" height="10.5" fill="#a8c4ff"/><rect x="151.62" y="379.12" width="9.6" height="9.6" fill="#061078"/><rect x="152.12" y="379.62" width="9.1" height="9.1" fill="#dcd8cc"/><rect x="163.06" y="378.22" width="11.4" height="11.4" fill="#4a80f8"/><rect x="163.96" y="379.12" width="10.5" height="10.5" fill="#a8c4ff"/><rect x="163.96" y="379.12" width="9.6" height="9.6" fill="#061078"/><rect x="164.46" y="379.62" width="9.1" height="9.1" fill="#dcd8cc"/><rect x="113.70" y="390.56" width="11.4" height="11.4" fill="#4a80f8"/><rect x="114.60" y="391.46" width="10.5" height="10.5" fill="#a8c4ff"/><rect x="114.60" y="391.46" width="9.6" height="9.6" fill="#061078"/><rect x="115.10" y="391.96" width="9.1" height="9.1" fill="#000"/><rect x="126.04" y="390.56" width="11.4" height="11.4" fill="#4a80f8"/><rect x="126.94" y="391.46" width="10.5" height="10.5" fill="#a8c4ff"/><rect x="126.94" y="391.46" width="9.6" height="9.6" fill="#061078"/><rect x="127.44" y="391.96" width="9.1" height="9.1" fill="#000"/><rect x="138.38" y="390.56" width="11.4" height="11.4" fill="#4a80f8"/><rect x="139.28" y="391.46" width="10.5" height="10.5" fill="#a8c4ff"/><rect x="139.28" y="391.46" width="9.6" height="9.6" fill="#061078"/><rect x="139.78" y="391.96" width="9.1" height="9.1" fill="#333"/><rect x="150.72" y="390.56" width="11.4" height="11.4" fill="#4a80f8"/><rect x="151.62" y="391.46" width="10.5" height="10.5" fill="#a8c4ff"/><rect x="151.62" y="391.46" width="9.6" height="9.6" fill="#061078"/><rect x="152.12" y="391.96" width="9.1" height="9.1" fill="#dcd8cc"/><rect x="163.06" y="390.56" width="11.4" height="11.4" fill="#4a80f8"/><rect x="163.96" y="391.46" width="10.5" height="10.5" fill="#a8c4ff"/><rect x="163.96" y="391.46" width="9.6" height="9.6" fill="#061078"/><rect x="164.46" y="391.96" width="9.1" height="9.1" fill="#dcd8cc"/><rect x="113.70" y="402.90" width="11.4" height="11.4" fill="#4a80f8"/><rect x="114.60" y="403.80" width="10.5" height="10.5" fill="#a8c4ff"/><rect x="114.60" y="403.80" width="9.6" height="9.6" fill="#061078"/><rect x="115.10" y="404.30" width="9.1" height="9.1" fill="#333"/><rect x="126.04" y="402.90" width="11.4" height="11.4" fill="#4a80f8"/><rect x="126.94" y="403.80" width="10.5" height="10.5" fill="#a8c4ff"/><rect x="126.94" y="403.80" width="9.6" height="9.6" fill="#061078"/><rect x="127.44" y="404.30" width="9.1" height="9.1" fill="#333"/><rect x="138.38" y="402.90" width="11.4" height="11.4" fill="#4a80f8"/><rect x="139.28" y="403.80" width="10.5" height="10.5" fill="#a8c4ff"/><rect x="139.28" y="403.80" width="9.6" height="9.6" fill="#061078"/><rect x="139.78" y="404.30" width="9.1" height="9.1" fill="#333"/><rect x="150.72" y="402.90" width="11.4" height="11.4" fill="#4a80f8"/><rect x="151.62" y="403.80" width="10.5" height="10.5" fill="#a8c4ff"/><rect x="151.62" y="403.80" width="9.6" height="9.6" fill="#061078"/><rect x="152.12" y="404.30" width="9.1" height="9.1" fill="#dcd8cc"/><rect x="163.06" y="402.90" width="11.4" height="11.4" fill="#4a80f8"/><rect x="163.96" y="403.80" width="10.5" height="10.5" fill="#a8c4ff"/><rect x="163.96" y="403.80" width="9.6" height="9.6" fill="#061078"/><rect x="164.46" y="404.30" width="9.1" height="9.1" fill="#dcd8cc"/><rect x="113.70" y="415.24" width="11.4" height="11.4" fill="#4a80f8"/><rect x="114.60" y="416.14" width="10.5" height="10.5" fill="#a8c4ff"/><rect x="114.60" y="416.14" width="9.6" height="9.6" fill="#061078"/><rect x="115.10" y="416.64" width="9.1" height="9.1" fill="#dcd8cc"/><rect x="126.04" y="415.24" width="11.4" height="11.4" fill="#4a80f8"/><rect x="126.94" y="416.14" width="10.5" height="10.5" fill="#a8c4ff"/><rect x="126.94" y="416.14" width="9.6" height="9.6" fill="#061078"/><rect x="127.44" y="416.64" width="9.1" height="9.1" fill="#dcd8cc"/><rect x="138.38" y="415.24" width="11.4" height="11.4" fill="#4a80f8"/><rect x="139.28" y="416.14" width="10.5" height="10.5" fill="#a8c4ff"/><rect x="139.28" y="416.14" width="9.6" height="9.6" fill="#061078"/><rect x="139.78" y="416.64" width="9.1" height="9.1" fill="#dcd8cc"/><rect x="150.72" y="415.24" width="11.4" height="11.4" fill="#4a80f8"/><rect x="151.62" y="416.14" width="10.5" height="10.5" fill="#a8c4ff"/><rect x="151.62" y="416.14" width="9.6" height="9.6" fill="#061078"/><rect x="152.12" y="416.64" width="9.1" height="9.1" fill="#dcd8cc"/><rect x="163.06" y="415.24" width="11.4" height="11.4" fill="#4a80f8"/><rect x="163.96" y="416.14" width="10.5" height="10.5" fill="#a8c4ff"/><rect x="163.96" y="416.14" width="9.6" height="9.6" fill="#061078"/><rect x="164.46" y="416.64" width="9.1" height="9.1" fill="#dcd8cc"/></svg>
<div style="left:5.5px;top:455px;width:682px;height:2.5px;background:linear-gradient(#e7ebf5,#999);"></div>
<div style="left:4px;top:457.5px;width:684px;height:2px;background:#444;"></div>
<div style="left:1px;top:459.5px;width:688px;height:2.5px;background:#e8e8e8;"></div>
<div style="left:364px;top:292px;width:131.2px;height:166.5px;background:#e7ebf5;border-left:1px solid #4a7ad0;border-top:1px solid #4a7ad0;"></div>
<div style="left:495.8px;top:294px;width:1.2px;height:164px;background:#141e5a;"></div>
<div style="left:492.6px;top:311px;width:2.2px;height:147px;background:linear-gradient(90deg,#c4c6cc,#8e9096);"></div>
<div style="left:365px;top:293px;width:130.2px;height:18px;background:#fff;"></div>
<div style="left:367px;top:295.5px;width:41.5px;height:14.5px;background:#eff1f8;border-right:1.5px solid #b4b4b8;"></div>
<span class="t c" style="left:387.5px;top:303px;font-size:8.2px;">Shadow</span>
<div style="left:410.5px;top:293.5px;width:43px;height:19px;background:#e7ebf5;border-right:2.5px solid #999;"></div>
<span class="t c" style="left:431px;top:301px;font-size:8.2px;">Moving</span>
<span class="t" style="left:370px;top:319px;">Cloud Direction Select</span>
<div style="left:369.6px;top:325.5px;width:117px;height:83.5px;background:#fbfbfd;"></div>
<div style="left:371.2px;top:327.1px;width:115px;height:81.6px;background:#2a2a2a;"></div>
<div style="left:371.8px;top:327.7px;width:37.2px;height:25.8px;background:linear-gradient(90deg,#fff 0%,#f6f6f6 55%,#dedede 88%,#a8a8a8 100%);"></div>
<div style="left:371.8px;top:349.0px;width:37.2px;height:4.5px;background:linear-gradient(rgba(220,220,220,0),#b4b4b4);"></div>
<div style="left:371.8px;top:327.7px;width:37.2px;height:2px;background:linear-gradient(#fff,rgba(255,255,255,0));"></div>
<div style="left:410.1px;top:327.7px;width:37.2px;height:25.8px;background:linear-gradient(90deg,#fff 0%,#f6f6f6 55%,#dedede 88%,#a8a8a8 100%);"></div>
<div style="left:410.1px;top:349.0px;width:37.2px;height:4.5px;background:linear-gradient(rgba(220,220,220,0),#b4b4b4);"></div>
<div style="left:410.1px;top:327.7px;width:37.2px;height:2px;background:linear-gradient(#fff,rgba(255,255,255,0));"></div>
<div style="left:448.4px;top:325.6px;width:38px;height:27.899999999999977px;background:#fff;"></div>
<div style="left:371.8px;top:354.9px;width:37.2px;height:25.8px;background:linear-gradient(90deg,#fff 0%,#f6f6f6 55%,#dedede 88%,#a8a8a8 100%);"></div>
<div style="left:371.8px;top:376.2px;width:37.2px;height:4.5px;background:linear-gradient(rgba(220,220,220,0),#b4b4b4);"></div>
<div style="left:371.8px;top:354.9px;width:37.2px;height:2px;background:linear-gradient(#fff,rgba(255,255,255,0));"></div>
<div style="left:410.1px;top:354.9px;width:37.2px;height:25.8px;background:#fff;"></div>
<div style="left:448.4px;top:354.9px;width:37.2px;height:25.8px;background:linear-gradient(90deg,#fff 0%,#f6f6f6 55%,#dedede 88%,#a8a8a8 100%);"></div>
<div style="left:448.4px;top:376.2px;width:37.2px;height:4.5px;background:linear-gradient(rgba(220,220,220,0),#b4b4b4);"></div>
<div style="left:448.4px;top:354.9px;width:37.2px;height:2px;background:linear-gradient(#fff,rgba(255,255,255,0));"></div>
<div style="left:371.8px;top:382.1px;width:37.2px;height:25.8px;background:linear-gradient(90deg,#fff 0%,#f6f6f6 55%,#dedede 88%,#a8a8a8 100%);"></div>
<div style="left:371.8px;top:403.40000000000003px;width:37.2px;height:4.5px;background:linear-gradient(rgba(220,220,220,0),#b4b4b4);"></div>
<div style="left:371.8px;top:382.1px;width:37.2px;height:2px;background:linear-gradient(#fff,rgba(255,255,255,0));"></div>
<div style="left:410.1px;top:382.1px;width:37.2px;height:25.8px;background:linear-gradient(90deg,#fff 0%,#f6f6f6 55%,#dedede 88%,#a8a8a8 100%);"></div>
<div style="left:410.1px;top:403.40000000000003px;width:37.2px;height:4.5px;background:linear-gradient(rgba(220,220,220,0),#b4b4b4);"></div>
<div style="left:410.1px;top:382.1px;width:37.2px;height:2px;background:linear-gradient(#fff,rgba(255,255,255,0));"></div>
<div style="left:448.4px;top:382.1px;width:37.2px;height:25.8px;background:linear-gradient(90deg,#fff 0%,#f6f6f6 55%,#dedede 88%,#a8a8a8 100%);"></div>
<div style="left:448.4px;top:403.40000000000003px;width:37.2px;height:4.5px;background:linear-gradient(rgba(220,220,220,0),#b4b4b4);"></div>
<div style="left:448.4px;top:382.1px;width:37.2px;height:2px;background:linear-gradient(#fff,rgba(255,255,255,0));"></div>
<svg style="left:0;top:0" width="691" height="463"><defs><linearGradient id="ag" x1="0" y1="0" x2="1" y2="1"><stop offset="0" stop-color="#9a9a9a"/><stop offset="0.5" stop-color="#555"/><stop offset="1" stop-color="#2c2c2c"/></linearGradient></defs><path d="M479.6 331.8L453.3 334.9L459.5 339L451.3 346.5L461.5 351.3L470.1 345.8L475.1 350.6Z" fill="url(#ag)" stroke="#3a3a3a" stroke-width="0.5" stroke-linejoin="round"/><ellipse cx="428.5" cy="374.8" rx="12" ry="1.5" fill="#ececec"/><path d="M418 370.2C412 370.2 411.5 362 417 361.3C417.5 354 429.5 353 432.8 359.2C437 357.5 445.5 360 445 365.5C444.8 368.5 442.5 370.2 440 370.2Z" fill="#fff" stroke="#2b70d0" stroke-width="1.4"/><path d="M431 362.3C432.5 360.3 435 359.3 437.3 359.6" fill="none" stroke="#2b70d0" stroke-width="1.3" stroke-linecap="round"/></svg>
<span class="t r" style="left:412px;top:414px;">Initial Setup</span>
<span class="t r" style="left:412px;top:423.5px;">Time(S)</span>
<span class="t r" style="left:412px;top:433.5px;">Total Moving</span>
<span class="t r" style="left:412px;top:443px;">Time (S)</span>
<svg style="left:414.5px;top:411.5px" width="8" height="15" viewBox="0 0 8 15"><rect x="0.3" y="0.3" width="7.4" height="14.4" rx="3.7" ry="5.2" fill="url(#spg)" stroke="#808080" stroke-width="0.6"/><path d="M4.0 3.0L5.7 5.8H2.3ZM4.0 12.0L5.7 9.2H2.3Z" fill="#555"/><path d="M1.2 7.5H6.8" stroke="#999" stroke-width="0.5"/></svg>
<svg style="left:414.5px;top:430.5px" width="8" height="15" viewBox="0 0 8 15"><rect x="0.3" y="0.3" width="7.4" height="14.4" rx="3.7" ry="5.2" fill="url(#spg)" stroke="#808080" stroke-width="0.6"/><path d="M4.0 3.0L5.7 5.8H2.3ZM4.0 12.0L5.7 9.2H2.3Z" fill="#555"/><path d="M1.2 7.5H6.8" stroke="#999" stroke-width="0.5"/></svg>
<div class="gb" style="left:425px;top:415px;width:37px;height:10.5px;">300</div>
<div class="gb" style="left:425px;top:434px;width:37px;height:10.5px;">9</div>
<div style="left:465.8px;top:412.3px;width:18.5px;height:34px;background:linear-gradient(90deg,#fafafa,#e0e0e0 55%,#aaa);border:1px solid #555;border-right:2px solid #333;border-bottom:2px solid #333;"></div>
<span class="t c" style="left:475px;top:429px;font-weight:bold;font-size:8px;">Go</span>
<span class="t" style="left:369.5px;top:454.5px;font-size:8px;">Progressing</span>
<div style="left:416.5px;top:451px;width:45.5px;height:6px;background:linear-gradient(#999,#d8d8d8 50%,#bbb);border-top:1px solid #666;border-left:1px solid #666;"></div>
<div style="left:417.5px;top:452.5px;width:1.5px;height:3.5px;background:#1040e0;"></div>
<span class="t" style="left:474.5px;top:454.5px;font-size:9px;">0 %</span>
<div style="left:497px;top:292.5px;width:187px;height:166px;background:#e7ebf5;"></div>
<div style="left:682px;top:292.5px;width:5px;height:166px;background:linear-gradient(90deg,#e7ebf5,#9a9ea8);"></div>
<div style="left:502px;top:296.5px;width:173.8px;height:38.5px;border:1.8px solid #505050;border-right-color:#6a6a6a;border-bottom-color:#6a6a6a;"></div>
<span class="t c" style="left:589px;top:303.5px;">Parameters Logging</span>
<div class="btn" style="left:523px;top:315.5px;width:30.5px;height:13px;">Add</div>
<div class="btn" style="left:575px;top:315.5px;width:28.8px;height:13px;border:1.6px solid #111;line-height:9.8px;font-size:7.1px;">Replace</div>
<div class="btn" style="left:627.5px;top:315.5px;width:30px;height:13px;">Delete</div>
<span class="t" style="left:503px;top:348.5px;">Supplier</span>
<span class="t" style="left:596px;top:348.5px;">Module Type</span>
<div class="combo" style="left:501.5px;top:355px;width:80px;height:12.8px;">Baoding Tianwei</div>
<div class="cbtn" style="left:570.5px;top:356px;width:10px;height:10.8px;"></div>
<svg style="left:572.5px;top:359.8px" width="6" height="4"><path d="M0 0h6l-3 3.5z" fill="#000"/></svg>
<div class="combo" style="left:594px;top:355px;width:81px;height:12.8px;">YL210C-24b</div>
<div class="cbtn" style="left:664.5px;top:356px;width:9.5px;height:10.8px;"></div>
<svg style="left:666.5px;top:359.8px" width="6" height="4"><path d="M0 0h6l-3 3.5z" fill="#000"/></svg>
<div style="left:493.5px;top:371.5px;width:195.3px;height:76px;background:#fff;border:1px solid #0a1a5a;border-top-color:#2c4c9c;border-left-color:#333;border-right:2.8px solid #10163c;"></div>
<span class="t" style="left:508px;top:381.0px;font-size:7.8px;">Atersa</span>
<span class="t" style="left:508px;top:395.3px;font-size:7.8px;">Baoding Tianwei Yingli New Energy Resources</span>
<span class="t" style="left:508px;top:409.6px;font-size:7.8px;">Kyocera Corporation</span>
<span class="t" style="left:508px;top:423.9px;font-size:7.8px;">Schott Electric Co., Ltd</span>
<span class="t" style="left:508px;top:438.2px;font-size:7.8px;">Schott Solar AG</span>
<svg style="left:499px;top:392px" width="7" height="8"><path d="M0.8 4.5L2.5 7L6 0.8" stroke="#000" stroke-width="1.2" fill="none"/></svg>
<svg style="left:485px;top:410px" width="206" height="53" viewBox="485 410 206 53">
<defs><linearGradient id="lg" gradientUnits="userSpaceOnUse" x1="545" y1="416" x2="495" y2="458"><stop offset="0" stop-color="#f89a20"/><stop offset="0.22" stop-color="#ee4c18"/><stop offset="0.5" stop-color="#dc1c16"/><stop offset="1" stop-color="#a4060c"/></linearGradient></defs>
<path d="M490 456L519 421Q521 418.4 526 418.1L547 417L541 427L536.5 441Q548 446 558 441Q563 438.5 566.5 434.5Q563 446 551 450Q540 453 527 451.5L512 451.5L509 456ZM529.5 426.5Q520 428 513 438.5L524.5 439.5Q527 432 529.5 426.5Z" fill="url(#lg)" fill-rule="evenodd"/>
<path d="M521 421.5Q530 419 543 419L541.5 421.5Q531 421.5 519 424.5Z" fill="#ffd080" opacity="0.7"/>
<text x="0" y="0" font-family="'Liberation Sans','Noto Sans CJK SC',sans-serif" font-weight="900" font-size="20" fill="#e81c1c" stroke="#fff" stroke-width="0.6" paint-order="stroke" textLength="113.5" lengthAdjust="spacingAndGlyphs" transform="translate(568.8 434.8) skewX(-9)">艾克赛普</text>
<text x="568.5" y="445.6" font-family="'Liberation Sans','Noto Sans CJK SC',sans-serif" font-size="8.5" font-style="italic" font-weight="bold" fill="#606060" textLength="114.5" lengthAdjust="spacing">测试 · 仪器 · 工控 · 集成</text>
<text x="570" y="455.2" font-family="'Liberation Sans',sans-serif" font-weight="bold" font-style="italic" font-size="9.8" fill="#111" textLength="113.5" lengthAdjust="spacingAndGlyphs">www.accexp.net</text>
<text x="513" y="455.8" font-family="'Liberation Sans',sans-serif" font-weight="bold" font-style="italic" font-size="10.5" fill="#fff" stroke="#d01c1c" stroke-width="1.1" paint-order="stroke" textLength="47" lengthAdjust="spacingAndGlyphs">CCEXP</text>
</svg>
</body></html>
